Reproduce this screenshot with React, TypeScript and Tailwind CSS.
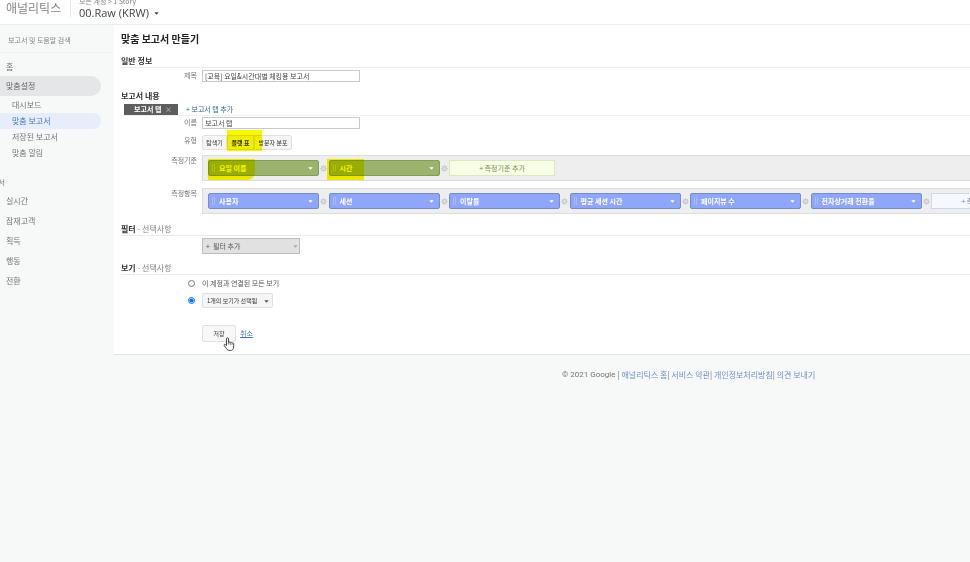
import type { ReactNode } from 'react';
import clsx from 'clsx';

const customItems = ['대시보드', '맞춤 보고서', '저장된 보고서', '맞춤 알림'];
const reportItems = ['실시간', '잠재고객', '획득', '행동', '전환'];
const dimensions = ['요일 이름', '시간'];
const metrics = ['사용자', '세션', '이탈률', '평균 세션 시간', '페이지뷰 수', '전자상거래 전환율'];
const footerLinks = ['애널리틱스 홈', '서비스 약관', '개인정보처리방침', '의견 보내기'];

function Caret({ className }: { className?: string }) {
  return (
    <svg viewBox="0 0 5 3" className={clsx('h-[3px] w-[5px] shrink-0', className)} aria-hidden="true">
      <path d="M.3.300h4.400L2.500 2.800z" fill="currentColor" />
    </svg>
  );
}

function Star() {
  return (
    <svg viewBox="0 0 8 8" className="h-[7px] w-[7px]" aria-hidden="true">
      <circle cx="4" cy="4" r="2.4" fill="#dedede" stroke="#c0c0c0" strokeWidth="1" />
      <path d="M4 0v1.5M4 6.500v1.500M0 4h1.500M6.500 4H8M1.200 1.200l1 1M5.800 5.800l1 1M6.800 1.200l-1 1M1.200 6.800l1-1" stroke="#c8c8c8" strokeWidth="1" />
    </svg>
  );
}

function Marker({ className }: { className: string }) {
  return <span className={clsx('pointer-events-none absolute bg-[#faf800] mix-blend-multiply', className)} />;
}

function Heading({ children, lined = true }: { children: ReactNode; lined?: boolean }) {
  return (
    <h2
      className={clsx(
        'flex h-[14px] items-center text-[8px] font-bold text-[#333]',
        lined && 'border-b border-[#ececec]',
      )}
    >
      {children}
    </h2>
  );
}

function Row({ label, htmlFor, className, children }: { label?: string; htmlFor?: string; className?: string; children: ReactNode }) {
  return (
    <div className={clsx('flex', className)}>
      <div className="mr-[5px] flex h-[10px] w-[76px] shrink-0 items-center justify-end text-[7px] text-[#777]">
        {label && <label htmlFor={htmlFor}>{label}</label>}
      </div>
      {children}
    </div>
  );
}

function Chip({ name, tone }: { name: string; tone: 'green' | 'blue' }) {
  return (
    <div className="flex items-center">
      <button
        type="button"
        className={clsx(
          'flex h-4 w-[111px] items-center rounded-[2px] border pr-[5px] pl-[3px] text-[7px] font-bold text-white',
          tone === 'green' ? 'border-[#849b59] bg-[#9bb36d]' : 'border-[#748bd0] bg-[#8fa6fb]',
        )}
      >
        <span className="mr-1 h-2 w-[3px] border-x border-white/25" />
        {name}
        <Caret className="ml-auto" />
      </button>
      <span className="flex flex-1 justify-center">
        <Star />
      </span>
    </div>
  );
}

function ChipBar({ children }: { children: ReactNode }) {
  return (
    <div className="h-[26px] min-w-0 flex-1 overflow-hidden border border-r-0 border-[#dedede] bg-[#eee] py-1 pl-[5px]">
      <div className="grid h-4 w-[964px] grid-cols-8">{children}</div>
    </div>
  );
}

function Sidebar() {
  return (
    <nav className="w-[114px] shrink-0 overflow-hidden bg-[#f7f9f9] text-[8px] text-[#757575]">
      <input
        aria-label="검색"
        placeholder="보고서 및 도움말 검색"
        className="block h-7 w-full border-b border-[#f0f2f2] pt-[2px] pl-2 text-[7px] outline-none placeholder:text-[#858585]"
      />
      <a href="#home" className="mt-1 flex h-[19px] items-center pl-[6px]">홈</a>
      <a href="#custom" className="flex h-5 w-[101px] items-center rounded-r-full bg-[#e5e6e7] pl-[6px] text-[#666]">
        맞춤설정
      </a>
      {customItems.map((item, i) => (
        <a
          key={item}
          href="#custom"
          className={clsx(
            'flex h-4 w-[101px] items-center rounded-r-full pl-3',
            i === 1 ? 'bg-[#e6eefb] text-[#4a72c4]' : '',
            i === 0 && 'mt-[1px]',
          )}
        >
          {item}
        </a>
      ))}
      <div className="mt-[13px] flex h-4 w-[5px] items-center justify-end overflow-hidden text-[7px] whitespace-nowrap">보고서</div>
      <div className="mt-[1px]">
        {reportItems.map((item) => (
          <a key={item} href="#report" className="flex h-5 items-center pl-[6px]">
            {item}
          </a>
        ))}
      </div>
    </nav>
  );
}

const inputClass = 'h-3 w-[158px] border border-[#c9c9c9] bg-white px-[2px] text-[7px] text-[#444] outline-none';
const tabButton = 'h-[15px] border border-[#e0e0e0] bg-[#f5f5f5] text-center text-[6px] whitespace-nowrap text-[#333]';

function ReportForm() {
  return (
    <form className="border-b border-[#dfe5e5] bg-white pb-3 pl-[7px]" onSubmit={(e) => e.preventDefault()}>
      <h1 className="flex h-[29px] items-center pb-[2px] text-[10px] font-bold text-[#222]">맞춤 보고서 만들기</h1>

      <Heading>일반 정보</Heading>
      <Row label="제목" htmlFor="title" className="mt-[2px]">
        <input id="title" className={inputClass} defaultValue="[교육] 요일&시간대별 체킹용 보고서" />
      </Row>

      <div className="mt-[7px]">
        <Heading lined={false}>보고서 내용</Heading>
      </div>
      <div className="flex h-[13px] items-end gap-2 border-b border-[#f0f0f0] pl-[3px] text-[7px]">
        <button type="button" className="flex h-[11px] w-[54px] items-center bg-[#5d5d5d] pr-[6px] pl-[10px] font-bold text-white">
          보고서 탭
          <span className="ml-auto font-normal text-[#ccc]">×</span>
        </button>
        <a href="#tab" className="flex h-3 items-center text-[#33679b]">+ 보고서 탭 추가</a>
      </div>
      <Row label="이름" htmlFor="name" className="mt-[1px]">
        <input id="name" className={inputClass} defaultValue="보고서 탭" />
      </Row>
      <Row label="유형" className="mt-[6px]">
        <div className="relative flex">
          <button type="button" className={clsx(tabButton, 'w-[25px] rounded-l-[2px]')}>탐색기</button>
          <button type="button" className={clsx(tabButton, 'w-[27px] border-[#999] bg-[#ddd] font-bold')}>플랫 표</button>
          <button type="button" className={clsx(tabButton, 'w-[38px] rounded-r-[2px]')}>방문자 분포</button>
          <Marker className="-top-[5px] left-[25px] h-[21px] w-[35px]" />
        </div>
      </Row>

      <Row label="측정기준" className="relative mt-[5px]">
        <ChipBar>
          {dimensions.map((name) => (
            <Chip key={name} name={name} tone="green" />
          ))}
          <button type="button" className="h-4 w-[106px] border border-[#d9e8c2] bg-[#f6ffe4] text-center text-[7px] text-[#7b8b5c]">
            + 측정기준 추가
          </button>
        </ChipBar>
        <Marker className="top-1 left-[87px] h-[21px] w-[47px] rounded-br-lg" />
        <Marker className="top-1 left-[206px] h-[21px] w-[37px]" />
      </Row>
      <Row label="측정항목" className="mt-[7px]">
        <ChipBar>
          {metrics.map((name) => (
            <Chip key={name} name={name} tone="blue" />
          ))}
          <button type="button" className="h-4 w-[106px] border border-[#cfd6ee] bg-[#f6f8ff] text-center text-[7px] text-[#7a86ad]">
            + 측정항목 추가
          </button>
        </ChipBar>
      </Row>

      <div className="mt-2">
        <Heading>
          필터<span className="font-normal text-[#888]">&nbsp;- 선택사항</span>
        </Heading>
      </div>
      <Row className="mt-[2px]">
        <div className="relative flex">
          <select aria-label="필터" className="h-4 w-[98px] appearance-none border border-[#bdbdbd] bg-[#e1e1e1] pl-[3px] text-[7px] text-[#555]">
            <option>+&nbsp; 필터 추가</option>
          </select>
          <Caret className="pointer-events-none absolute top-[7px] right-[2px] text-[#aaa]" />
        </div>
      </Row>

      <div className="mt-[7px]">
        <Heading>
          보기<span className="font-normal text-[#888]">&nbsp;- 선택사항</span>
        </Heading>
      </div>
      <div className="mt-[1px] flex h-[15px] items-center pl-[67px] text-[7px] text-[#555]">
        <input id="all" type="radio" name="view" className="mr-[7px] h-[7px] w-[7px]" />
        <label htmlFor="all">이 계정과 연결된 모든 보기</label>
      </div>
      <div className="mt-[2px] flex h-[15px] items-center pl-[67px]">
        <input type="radio" name="view" aria-label="선택한 보기" defaultChecked className="mr-[7px] h-[7px] w-[7px]" />
        <div className="relative flex">
          <select aria-label="보기" className="h-[15px] w-[71px] appearance-none rounded-[2px] border border-[#e0e0e0] bg-[#f5f5f5] pl-1 text-[6px] text-[#333]">
            <option>1개의 보기가 선택됨</option>
          </select>
          <Caret className="pointer-events-none absolute top-[7px] right-[4px] text-[#555]" />
        </div>
      </div>

      <Row className="mt-[17px]">
        <div className="relative flex items-center gap-[4px] text-[7px]">
          <button type="submit" className="h-[17px] w-[34px] rounded-[2px] border border-[#e0e0e0] bg-[#f8f8f8] text-center text-[6px] text-[#333]">저장</button>
          <a href="#cancel" className="text-[#4179ae] underline">취소</a>
          <svg viewBox="0 0 12 14" className="absolute top-3 left-[21px] h-[14px] w-3" aria-hidden="true">
            <path
              d="M3.500 8.500V1.800a1 1 0 0 1 2 0V5.500a1 1 0 0 1 1.800.300 1 1 0 0 1 1.700.400 1 1 0 0 1 1.700.900V10c0 2.200-1.300 3.500-3.500 3.500-2 0-3-.700-4-2.300L1.200 8.700c-.500-1 .600-1.700 1.300-1z"
              fill="#fff"
              stroke="#444"
              strokeWidth="1"
              strokeLinejoin="round"
            />
            <path d="M5.500 5.500v2M7.300 6v1.800M9 6.400v1.500" stroke="#444" strokeWidth=".7" />
          </svg>
        </div>
      </Row>
    </form>
  );
}

export default function App() {
  return (
    <div className="flex min-h-screen flex-col overflow-hidden bg-[#f7f9f9] font-['Noto_Sans_CJK_KR',sans-serif] leading-none">
      <header className="flex h-[25px] overflow-hidden border-b border-[#eceeee] bg-white pl-[6px]">
        <div className="mr-[6px] flex h-4 w-[58px] shrink-0 items-center text-[12px] whitespace-nowrap text-[#858585]">애널리틱스</div>
        <div className="h-[17px] border-l border-[#e6e6e6] pl-2">
          <div className="-mt-[2px] text-[7px] whitespace-nowrap text-[#888]">모든 계정 &gt; 1 Story</div>
          <button type="button" className="mt-[2px] flex items-center gap-[5px] font-['Open_Sans',sans-serif] text-[11px] leading-[12px] whitespace-nowrap text-[#444]">
            00.Raw (KRW)
            <Caret />
          </button>
        </div>
      </header>
      <div className="flex flex-1">
        <Sidebar />
        <main className="min-w-0 flex-1">
          <ReportForm />
          <footer className="mt-4 flex pl-[448px] text-[8px] whitespace-nowrap text-[#757575]">
            <span className="mr-[2px] font-[Roboto,sans-serif]">© 2021 Google</span>
            {footerLinks.map((link) => (
              <span key={link}>
                | <a href="#footer" className="text-[#6f8fc9]">{link}</a>
              </span>
            ))}
          </footer>
        </main>
      </div>
    </div>
  );
}
